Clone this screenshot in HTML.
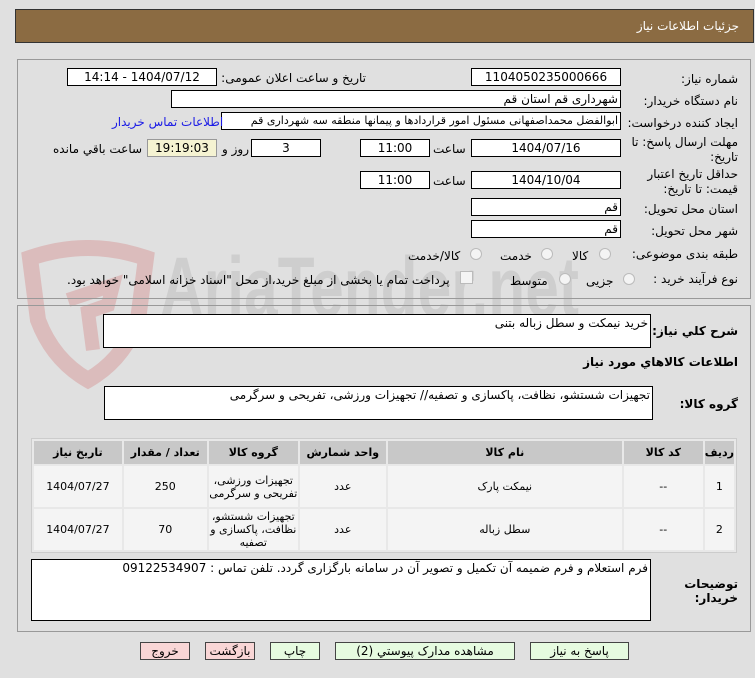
<!DOCTYPE html>
<html><head><meta charset="utf-8"><style>
*{box-sizing:border-box;margin:0;padding:0}
body{width:755px;height:678px;background:#e0e0e0;position:relative;overflow:hidden;font-family:"DejaVu Sans",sans-serif;font-size:11px;color:#000;direction:rtl}
.a{position:absolute}
.box{position:absolute;background:#fff;border:1px solid #000;height:18px;line-height:16px;font-size:12px;padding:0 2px;white-space:nowrap;overflow:hidden}
.c{text-align:center}
.lbl{position:absolute;font-size:12px;white-space:nowrap}
.panel{position:absolute;border:1px solid #999;left:17px;width:734px}
.radio{position:absolute;width:12px;height:12px;border:1px solid #bbb;border-radius:50%;background:#f4f4f4}
table{border-collapse:separate;border-spacing:2px;position:absolute;left:31px;top:438px;width:706px;background:#e8e8e8;border:1px solid #ccc}
th{background:#c8c8c8;font-size:11px;height:23px;font-weight:bold}
td{background:#f4f4f4;text-align:center;font-size:11px;height:41px;line-height:13px}
.btn{position:absolute;top:642px;height:18px;border:1px solid #444;font-size:12px;line-height:16px;text-align:center;background:#e6fbe0}
.pink{background:#f9d6d6}
</style></head><body>
<div class="a" style="left:15px;top:9px;width:739px;height:34px;background:#8b6b42;border:1px solid #333"></div>
<div class="lbl" style="right:16px;top:19px;color:#fff;font-size:12px">جزئیات اطلاعات نیاز</div>

<svg class="a" style="left:18px;top:240px" width="140" height="150" viewBox="0 0 140 150"><path d="M12 18 Q70 -2 128 18 L120 80 Q105 120 70 140 Q35 120 20 80 Z" fill="none" stroke="rgba(210,120,120,0.35)" stroke-width="16"/><path d="M50 60 L95 45 L90 65 L70 72 L75 110" fill="none" stroke="rgba(210,120,120,0.35)" stroke-width="14"/></svg>
<div class="a" style="left:160px;top:232px;width:445px;font-size:84px;line-height:110px;color:rgba(0,0,0,0.08);font-weight:bold;direction:ltr;white-space:nowrap;font-family:'Liberation Sans',sans-serif;transform:scaleX(0.72);transform-origin:left top">AriaTender.net</div>

<div class="panel" style="top:59px;height:240px"></div>
<div class="lbl" style="right:17px;top:72px">شماره نیاز:</div>
<div class="box c" style="left:471px;top:68px;width:150px">1104050235000666</div>
<div class="lbl" style="right:389px;top:71px">تاریخ و ساعت اعلان عمومی:</div>
<div class="box c" style="left:67px;top:68px;width:150px">1404/07/12 - 14:14</div>

<div class="lbl" style="right:17px;top:94px">نام دستگاه خریدار:</div>
<div class="box" style="left:171px;top:90px;width:450px">شهرداری قم استان قم</div>

<div class="lbl" style="right:17px;top:116px">ایجاد کننده درخواست:</div>
<div class="box" style="left:221px;top:112px;width:400px;font-size:11px;letter-spacing:-0.2px">ابوالفضل محمداصفهانی مسئول امور قراردادها و پیمانها منطقه سه شهرداری قم</div>
<div class="lbl" style="left:112px;top:115px;color:#1a1ae6">اطلاعات تماس خریدار</div>

<div class="lbl" style="right:17px;top:135px;line-height:15px">مهلت ارسال پاسخ: تا<br>تاریخ:</div>
<div class="box c" style="left:471px;top:139px;width:150px">1404/07/16</div>
<div class="lbl" style="left:433px;top:142px">ساعت</div>
<div class="box c" style="left:360px;top:139px;width:70px">11:00</div>
<div class="box c" style="left:251px;top:139px;width:70px">3</div>
<div class="lbl" style="left:222px;top:142px">روز و</div>
<div class="box c" style="left:147px;top:139px;width:70px;background:#f5f3d2;border-color:#999">19:19:03</div>
<div class="lbl" style="left:53px;top:142px">ساعت باقي مانده</div>

<div class="lbl" style="right:17px;top:167px;line-height:15px">حداقل تاریخ اعتبار<br>قیمت: تا تاریخ:</div>
<div class="box c" style="left:471px;top:171px;width:150px">1404/10/04</div>
<div class="lbl" style="left:433px;top:174px">ساعت</div>
<div class="box c" style="left:360px;top:171px;width:70px">11:00</div>

<div class="lbl" style="right:17px;top:202px">استان محل تحویل:</div>
<div class="box" style="left:471px;top:198px;width:150px">قم</div>
<div class="lbl" style="right:17px;top:224px">شهر محل تحویل:</div>
<div class="box" style="left:471px;top:220px;width:150px">قم</div>

<div class="lbl" style="right:17px;top:247px">طبقه بندی موضوعی:</div>
<div class="radio" style="left:599px;top:248px"></div><div class="lbl" style="left:572px;top:249px">کالا</div>
<div class="radio" style="left:541px;top:248px"></div><div class="lbl" style="left:500px;top:249px">خدمت</div>
<div class="radio" style="left:470px;top:248px"></div><div class="lbl" style="left:408px;top:249px">کالا/خدمت</div>

<div class="lbl" style="right:17px;top:272px">نوع فرآیند خرید :</div>
<div class="radio" style="left:623px;top:273px"></div><div class="lbl" style="left:586px;top:274px">جزیی</div>
<div class="radio" style="left:559px;top:273px"></div><div class="lbl" style="left:510px;top:274px">متوسط</div>
<div class="a" style="left:460px;top:271px;width:13px;height:13px;border:1px solid #bbb;background:#f4f4f4"></div>
<div class="lbl" style="left:67px;top:273px">پرداخت تمام یا بخشی از مبلغ خرید،از محل "اسناد خزانه اسلامی" خواهد بود.</div>

<div class="panel" style="top:305px;height:327px"></div>
<div class="lbl" style="right:17px;top:324px;font-weight:bold">شرح کلي نياز:</div>
<div class="box" style="left:103px;top:314px;width:548px;height:34px">خرید نیمکت و سطل زباله بتنی</div>
<div class="lbl" style="right:17px;top:355px;font-weight:bold">اطلاعات کالاهاي مورد نياز</div>
<div class="lbl" style="right:17px;top:397px;font-weight:bold">گروه کالا:</div>
<div class="box" style="left:104px;top:386px;width:549px;height:34px">تجهیزات شستشو، نظافت، پاکسازی و تصفیه// تجهیزات ورزشی، تفریحی و سرگرمی</div>

<table>
<tr><th style="width:27px">رديف</th><th style="width:79px">کد کالا</th><th style="width:234px">نام کالا</th><th style="width:86px">واحد شمارش</th><th style="width:89px">گروه کالا</th><th style="width:83px">تعداد / مقدار</th><th>تاریخ نیاز</th></tr>
<tr><td>1</td><td>--</td><td>نیمکت پارک</td><td>عدد</td><td>تجهیزات ورزشی، تفریحی و سرگرمی</td><td>250</td><td>1404/07/27</td></tr>
<tr><td>2</td><td>--</td><td>سطل زباله</td><td>عدد</td><td>تجهیزات شستشو، نظافت، پاکسازی و تصفیه</td><td>70</td><td>1404/07/27</td></tr>
</table>

<div class="lbl" style="right:17px;top:577px;font-weight:bold;line-height:14px">توضیحات<br>خریدار:</div>
<div class="box" style="left:31px;top:559px;width:620px;height:62px">فرم استعلام و فرم ضمیمه آن تکمیل و تصویر آن در سامانه بارگزاری گردد. تلفن تماس : 09122534907</div>

<div class="btn" style="left:530px;width:99px">پاسخ به نیاز</div>
<div class="btn" style="left:335px;width:180px">مشاهده مدارک پیوستي (2)</div>
<div class="btn" style="left:270px;width:50px">چاپ</div>
<div class="btn pink" style="left:205px;width:50px">بازگشت</div>
<div class="btn pink" style="left:140px;width:50px">خروج</div>
</body></html>
